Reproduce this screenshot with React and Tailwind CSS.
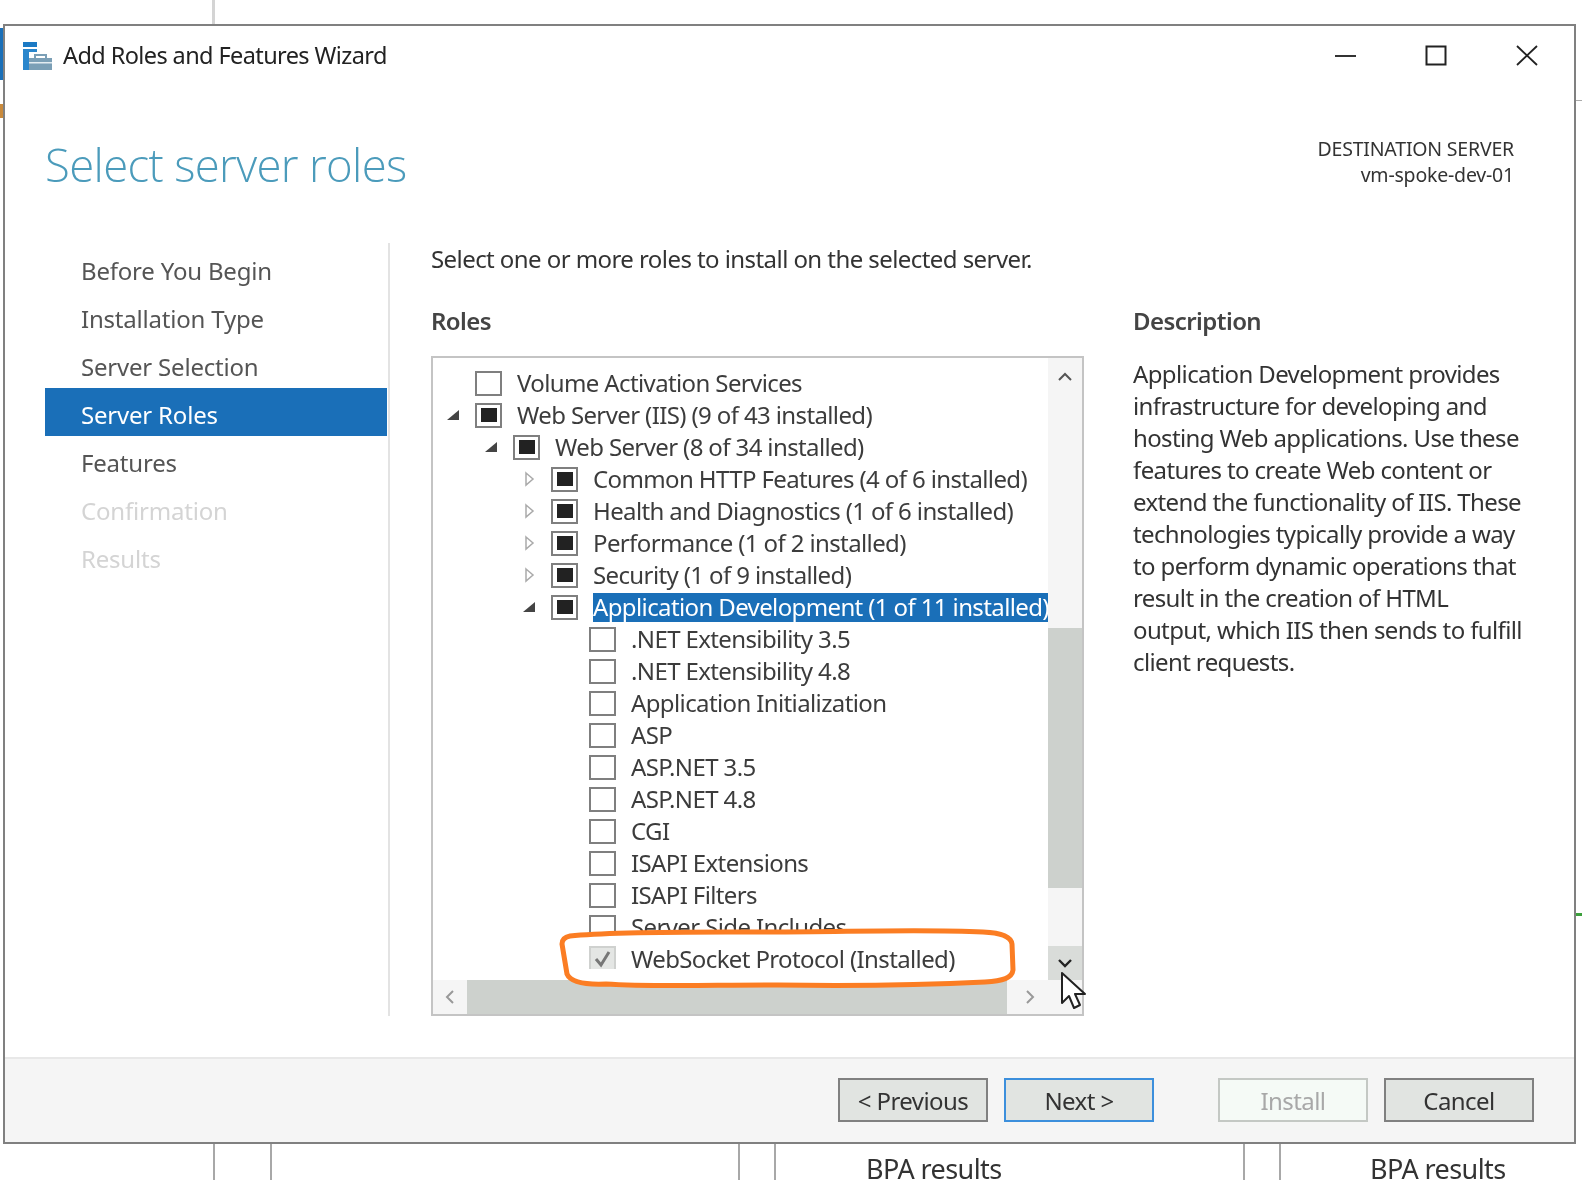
import React from 'react';

const steps = [
  { label: 'Before You Begin' },
  { label: 'Installation Type' },
  { label: 'Server Selection' },
  { label: 'Server Roles', active: true },
  { label: 'Features' },
  { label: 'Confirmation', disabled: true },
  { label: 'Results', disabled: true },
];

const roles = [
  { label: 'Volume Activation Services', level: 0 },
  { label: 'Web Server (IIS) (9 of 43 installed)', level: 0, mixed: true, arrow: 'open' },
  { label: 'Web Server (8 of 34 installed)', level: 1, mixed: true, arrow: 'open' },
  { label: 'Common HTTP Features (4 of 6 installed)', level: 2, mixed: true, arrow: 'closed' },
  { label: 'Health and Diagnostics (1 of 6 installed)', level: 2, mixed: true, arrow: 'closed' },
  { label: 'Performance (1 of 2 installed)', level: 2, mixed: true, arrow: 'closed' },
  { label: 'Security (1 of 9 installed)', level: 2, mixed: true, arrow: 'closed' },
  { label: 'Application Development (1 of 11 installed)', level: 2, mixed: true, arrow: 'open', selected: true },
  { label: '.NET Extensibility 3.5', level: 3 },
  { label: '.NET Extensibility 4.8', level: 3 },
  { label: 'Application Initialization', level: 3 },
  { label: 'ASP', level: 3 },
  { label: 'ASP.NET 3.5', level: 3 },
  { label: 'ASP.NET 4.8', level: 3 },
  { label: 'CGI', level: 3 },
  { label: 'ISAPI Extensions', level: 3 },
  { label: 'ISAPI Filters', level: 3 },
  { label: 'Server Side Includes', level: 3 },
  { label: 'WebSocket Protocol (Installed)', level: 3, installed: true },
];

const levelPad = ['pl-[13px]', 'pl-[51px]', 'pl-[89px]', 'pl-[127px]'];

const description = [
  'Application Development provides',
  'infrastructure for developing and',
  'hosting Web applications. Use these',
  'features to create Web content or',
  'extend the functionality of IIS. These',
  'technologies typically provide a way',
  'to perform dynamic operations that',
  'result in the creation of HTML',
  'output, which IIS then sends to fulfill',
  'client requests.',
];

const WizardIcon = () => (
  <svg width="30" height="30" viewBox="0 0 30 30" className="shrink-0">
    <rect x="1" y="1" width="14" height="5" fill="#1c7ac4" />
    <rect x="1" y="8" width="6" height="21" fill="#2a86cc" />
    <rect x="7" y="8" width="8" height="3" fill="#2a86cc" />
    <rect x="7" y="17" width="23" height="12" fill="#7b9fb6" />
    <path d="M13 17v-3h11v3" fill="none" stroke="#7b9fb6" strokeWidth="2" />
    <rect x="7" y="21" width="23" height="1.5" fill="#e3ecf1" />
  </svg>
);

const Arrow = ({ type }) => {
  if (type === 'open') {
    return (
      <svg width="14" height="14" viewBox="0 0 14 14">
        <path d="M13 2v10H1z" fill="#444" />
      </svg>
    );
  }
  if (type === 'closed') {
    return (
      <svg width="14" height="16" viewBox="0 0 14 16">
        <path d="M4 2l7 6-7 6z" fill="none" stroke="#aaa" strokeWidth="1.5" />
      </svg>
    );
  }
  return null;
};

const Checkbox = ({ mixed, installed }) => {
  if (installed) {
    return (
      <div className="w-[27px] h-[23px] self-start mt-[3px] bg-[#e4e6e4] border-t-2 border-x-2 border-[#cfd1cf] flex items-center justify-center shrink-0">
        <svg width="20" height="18" viewBox="0 0 20 18">
          <path d="M3 9l5 6 8-13" fill="none" stroke="#777" strokeWidth="3" />
        </svg>
      </div>
    );
  }
  return (
    <div className="w-[27px] h-[25px] border-2 border-[#7f7f7f] bg-white flex items-center justify-center shrink-0">
      {mixed && <div className="w-[16px] h-[14px] bg-[#222]" />}
    </div>
  );
};

const RoleRow = ({ role }) => (
  <div className={`h-[32px] flex items-center whitespace-nowrap ${levelPad[role.level]} ${role.installed ? 'relative z-20' : ''}`}>
    {role.level < 3 && (
      <div className="w-[29px] shrink-0 flex items-center">
        <Arrow type={role.arrow} />
      </div>
    )}
    {role.level === 3 && <div className="w-[29px] shrink-0" />}
    <Checkbox mixed={role.mixed} installed={role.installed} />
    <span className={`ml-[15px] h-[29px] leading-[27px] tracking-[-0.62px] ${role.selected ? 'bg-[#1a6fb8] text-white pr-[6px]' : 'text-[#3c3c3c]'}`}>
      {role.label}
    </span>
  </div>
);

const WizardButton = ({ children, variant, className }) => {
  const look =
    variant === 'focus'
      ? 'border-[#3c8fdc] bg-[#e1e4e1] text-[#333]'
      : variant === 'disabled'
        ? 'border-[#c4c8c4] bg-[#f5faf6] text-[#a8a8a8]'
        : 'border-[#808080] bg-[#e1e4e1] text-[#333]';
  return (
    <button className={`w-[150px] h-[44px] border-2 pt-[1px] text-[24px] flex items-center justify-center ${look} ${className || ''}`}>
      {children}
    </button>
  );
};

export default function App() {
  return (
    <div className="relative w-[1582px] h-[1180px] bg-white overflow-hidden blur-[0.5px] font-['Noto_Sans','Liberation_Sans',sans-serif] tracking-[-0.57px]">
      {/* stuff behind the dialog */}
      <div className="absolute left-[212px] top-0 w-[3px] h-[26px] bg-[#d4d4d4]" />
      <div className="absolute left-0 top-[28px] w-[3px] h-[52px] bg-[#1a6fb8]" />
      <div className="absolute left-0 top-[104px] w-[3px] h-[14px] bg-[#c98a3c]" />
      <div className="absolute left-[1576px] top-[100px] w-[6px] h-[1px] bg-[#aaa]" />
      <div className="absolute left-[1576px] top-[913px] w-[6px] h-[3px] bg-[#3ca03c]" />
      {[213, 270, 738, 774, 1243, 1279].map((x) => (
        <div key={x} className="absolute top-[1144px] w-[2px] h-[36px] bg-[#a8a8a8]" style={{ left: x }} />
      ))}
      <div className="absolute left-[866px] top-[1158px] text-[27px] leading-[22px] text-[#333]">BPA results</div>
      <div className="absolute left-[1370px] top-[1158px] text-[27px] leading-[22px] text-[#333]">BPA results</div>

      {/* dialog */}
      <div className="absolute left-[3px] top-[24px] w-[1573px] h-[1120px] border-2 border-[#808080] bg-white flex flex-col">
        <div className="h-[58px] shrink-0 flex items-center pl-[17px] pt-[1px] relative">
          <WizardIcon />
          <span className="ml-[11px] text-[23.5px] text-[#222] tracking-[-0.6px]">Add Roles and Features Wizard</span>
          <div className="ml-auto flex items-center pr-[36px]">
            <svg width="24" height="24" viewBox="0 0 24 24" className="mr-[67px]">
              <path d="M1 12h21" stroke="#333" strokeWidth="2" />
            </svg>
            <svg width="22" height="22" viewBox="0 0 22 22" className="mr-[69px]">
              <rect x="1.5" y="1.5" width="19" height="18" fill="none" stroke="#222" strokeWidth="2" />
            </svg>
            <svg width="22" height="22" viewBox="0 0 22 22">
              <path d="M1 1l20 19M21 1L1 20" stroke="#222" strokeWidth="1.8" />
            </svg>
          </div>
        </div>

        <div className="h-[159px] shrink-0 flex justify-between pl-[40px] pr-[60px]">
          <h1 className="font-['Open_Sans','Noto_Sans',sans-serif] font-light text-[45.5px] leading-[60px] mt-[50px] text-[#4b9bbb] tracking-[-0.65px]">
            Select server roles
          </h1>
          <div className="text-right text-[19.5px] leading-[26px] text-[#333] mt-[52px] tracking-[-0.2px]">
            <div>DESTINATION SERVER</div>
            <div>vm-spoke-dev-01</div>
          </div>
        </div>

        <div className="h-[773px] shrink-0 flex">
          <div className="w-[385px] shrink-0 pl-[40px] pt-[1px] border-r-2 border-[#e3e3e3]">
            {steps.map((s) => (
              <div
                key={s.label}
                className={`w-[342px] h-[48px] flex items-center pl-[36px] pt-[5px] text-[24px] tracking-[-0.2px] ${
                  s.active ? 'bg-[#1a6fb8] text-white' : s.disabled ? 'text-[#d4d4d4]' : 'text-[#555]'
                }`}
              >
                {s.label}
              </div>
            ))}
          </div>

          <div className="w-[653px] shrink-0 ml-[41px]">
            <div className="h-[32px] leading-[32px] text-[24px] text-[#333] whitespace-nowrap">
              Select one or more roles to install on the selected server.
            </div>
            <div className="mt-[31px] h-[32px] leading-[30px] text-[24px] font-semibold text-[#444]">Roles</div>
            <div className="relative mt-[18px] w-[653px] h-[660px] border-2 border-[#c4c4c4] bg-white flex flex-col">
              <div className="flex flex-1 min-h-0">
                <div className="flex-1 min-w-0 overflow-hidden pt-[9px] text-[24px]">
                  {roles.map((r) => (
                    <RoleRow key={r.label} role={r} />
                  ))}
                </div>
                <div className="w-[34px] shrink-0 bg-[#f5f5f5] flex flex-col">
                  <div className="h-[38px] flex items-center justify-center">
                    <svg width="16" height="12" viewBox="0 0 16 12">
                      <path d="M2 9l6-6 6 6" fill="none" stroke="#555" strokeWidth="2" />
                    </svg>
                  </div>
                  <div className="h-[232px]" />
                  <div className="h-[260px] bg-[#cdd1cd]" />
                  <div className="flex-1" />
                  <div className="h-[34px] bg-[#d9dcd9] flex items-center justify-center">
                    <svg width="16" height="12" viewBox="0 0 16 12">
                      <path d="M2 3l6 6 6-6" fill="none" stroke="#222" strokeWidth="2.4" />
                    </svg>
                  </div>
                </div>
              </div>
              <div className="h-[34px] shrink-0 flex bg-[#f5f5f5]">
                <div className="w-[34px] flex items-center justify-center">
                  <svg width="12" height="16" viewBox="0 0 12 16">
                    <path d="M9 2L3 8l6 6" fill="none" stroke="#999" strokeWidth="2" />
                  </svg>
                </div>
                <div className="w-[540px] bg-[#cdd1cd]" />
                <div className="w-[45px] flex items-center justify-center">
                  <svg width="12" height="16" viewBox="0 0 12 16">
                    <path d="M3 2l6 6-6 6" fill="none" stroke="#999" strokeWidth="2" />
                  </svg>
                </div>
              </div>

              {/* hand drawn annotation over the list */}
              <svg width="462" height="60" viewBox="0 0 462 60" className="absolute left-[123px] top-[570px] z-10">
                <path
                  d="M14 8C60 3 150 4 215 4c75 0 150-3 212 0 20 1 28 5 29 12l1 26c-1 8-10 11-28 12-60 3-132 4-207 3-70 0-130 2-172-1-24 1-36-3-39-10L6 16c0-4 3-7 8-8z"
                  fill="#fff"
                  stroke="#fb7d23"
                  strokeWidth="5"
                />
              </svg>
              {/* mouse pointer */}
              <svg width="28" height="40" viewBox="0 0 28 40" className="absolute left-[626px] top-[613px] z-30">
                <path d="M3 2v30l7-7 5 12 6-3-5-11h10z" fill="#fff" stroke="#222" strokeWidth="2" strokeLinejoin="round" />
              </svg>
            </div>
          </div>

          <div className="ml-[49px] w-[420px]">
            <div className="h-[32px] mt-[63px] leading-[30px] text-[24px] font-semibold text-[#444]">Description</div>
            <div className="mt-[20px] text-[24px] leading-[32px] text-[#333] whitespace-nowrap tracking-[-0.62px]">
              {description.map((line) => (
                <div key={line}>{line}</div>
              ))}
            </div>
          </div>
        </div>

        <div className="mt-[41px] flex-1 bg-[#f5f5f5] border-t-2 border-[#e8e8e8] flex items-start pt-[19px] pl-[833px]">
          <WizardButton>&lt; Previous</WizardButton>
          <WizardButton variant="focus" className="ml-[16px]">Next &gt;</WizardButton>
          <WizardButton variant="disabled" className="ml-[64px]">Install</WizardButton>
          <WizardButton className="ml-[16px]">Cancel</WizardButton>
        </div>
      </div>
    </div>
  );
}
